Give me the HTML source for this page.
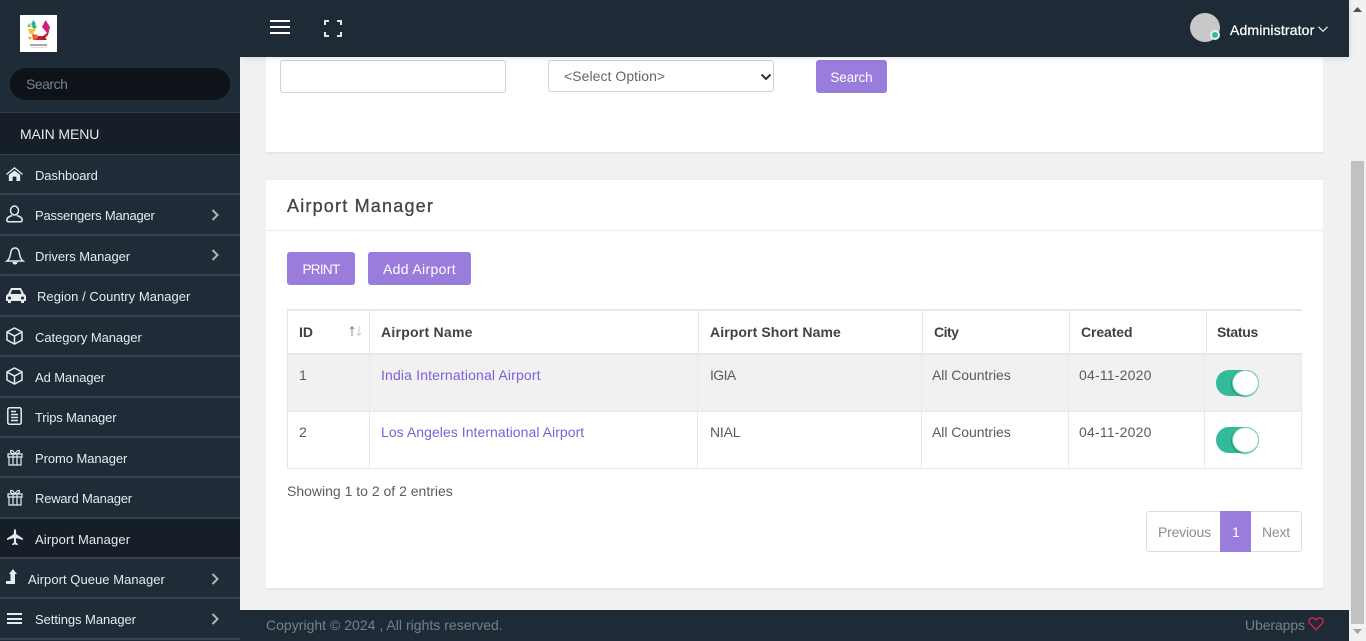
<!DOCTYPE html>
<html lang="en"><head><meta charset="utf-8"><title>Airport Manager</title>
<style>
html,body{margin:0;padding:0;width:1366px;height:641px;overflow:hidden;background:#f1f1f1;font-family:"Liberation Sans",sans-serif}
.a{position:absolute;box-sizing:border-box}
.t{position:absolute;white-space:nowrap;line-height:20px;height:20px}
.m{color:#e6ebef;font-size:13px;left:35px}
.sep{position:absolute;left:0;width:240px;height:2px;background:#37424e}
.b{position:absolute;background:#997cdb;color:#fff;border-radius:3px;font-size:14px;text-align:center}
.h{font-weight:bold;font-size:14px;color:#3d4248}
.c{font-size:14px;color:#585c60}
.l{font-size:14px;color:#7f5fd9}
.v{position:absolute;width:1px;background:#e2eaf1}
.ln{position:absolute;background:#e2eaf1}
svg{position:absolute;overflow:visible}
.ic{fill:none;stroke:#e6ebef;stroke-width:1.5}
.sw{position:absolute;left:1216px;width:43px;height:26px;background:#33bb99;border-radius:13px}
.sw i{position:absolute;left:16px;top:0;width:27px;height:26px;box-sizing:border-box;background:#fff;border:1px solid #7fd0bb;border-radius:50%;box-shadow:-1px 1px 1px rgba(20,120,95,.6)}
</style></head><body>

<!-- main area -->
<div class="a" style="left:266px;top:57px;width:1057px;height:95px;background:#fff"></div>
<div class="a" style="left:266px;top:152px;width:1058px;height:2px;background:#e6e6e6"></div>
<div class="a" style="left:280px;top:60px;width:226px;height:33px;background:#fff;border:1px solid #d2d2d2;border-radius:3px"></div>
<div class="a" style="left:548px;top:60px;width:226px;height:32px;background:#fff;border:1px solid #d2d2d2;border-radius:3px"></div>
<div class="t" style="left:564px;top:66px;font-size:14px;color:#666;letter-spacing:.05px">&lt;Select Option&gt;</div>
<svg style="left:760px;top:73px" width="12" height="8"><path d="M1.500 1.500L6 6L10.500 1.500" fill="none" stroke="#333" stroke-width="2"/></svg>
<div class="b" style="left:816px;top:60px;width:71px;height:33px;line-height:35px;font-size:13.500px;letter-spacing:-.1px">Search</div>

<div class="a" style="left:266px;top:180px;width:1057px;height:408px;background:#fff"></div>
<div class="a" style="left:266px;top:179px;width:1057px;height:1px;background:#ededed"></div>
<div class="a" style="left:266px;top:588px;width:1058px;height:2px;background:#e6e6e6"></div>
<div class="t" style="left:287px;top:196px;font-size:18px;color:#444;letter-spacing:1.2px;-webkit-text-stroke:.3px #444">Airport Manager</div>
<div class="a" style="left:266px;top:230px;width:1057px;height:1px;background:#ececec"></div>
<div class="b" style="left:287px;top:252px;width:68px;height:33px;line-height:35px;font-size:13.500px;letter-spacing:-.7px">PRINT</div>
<div class="b" style="left:368px;top:252px;width:103px;height:33px;line-height:35px;letter-spacing:.35px">Add Airport</div>

<!-- table -->
<div class="a" style="left:288px;top:354px;width:1013px;height:58px;background:#f1f1f1"></div>
<div class="ln" style="left:287px;top:309px;width:1015px;height:2px"></div>
<div class="ln" style="left:287px;top:353px;width:1015px;height:2px"></div>
<div class="ln" style="left:287px;top:411px;width:1015px;height:1px"></div>
<div class="ln" style="left:287px;top:468px;width:1015px;height:1px"></div>
<div class="v" style="left:287px;top:310px;height:159px"></div>
<div class="v" style="left:369px;top:310px;height:159px"></div>
<div class="v" style="left:698px;top:310px;height:44px"></div><div class="v" style="left:697px;top:354px;height:115px"></div>
<div class="v" style="left:922px;top:310px;height:44px"></div><div class="v" style="left:921px;top:354px;height:115px"></div>
<div class="v" style="left:1069px;top:310px;height:44px"></div><div class="v" style="left:1068px;top:354px;height:115px"></div>
<div class="v" style="left:1206px;top:310px;height:44px"></div><div class="v" style="left:1204px;top:354px;height:115px"></div>
<div class="v" style="left:1301px;top:354px;height:115px"></div>

<div class="t h" style="left:299px;top:322px">ID</div>
<svg style="left:349px;top:326px" width="13" height="10" viewBox="0 0 13 10"><path d="M3 10V1M1 3L3 .8L5 3" fill="none" stroke="#8a8a8a" stroke-width="1"/><path d="M10 0V9M8 7L10 9.200L12 7" fill="none" stroke="#cfcfcf" stroke-width="1"/></svg>
<div class="t h" style="left:381px;top:322px;letter-spacing:.25px">Airport Name</div>
<div class="t h" style="left:710px;top:322px;letter-spacing:.1px">Airport Short Name</div>
<div class="t h" style="left:934px;top:322px;letter-spacing:-.5px">City</div>
<div class="t h" style="left:1081px;top:322px;letter-spacing:-.1px">Created</div>
<div class="t h" style="left:1217px;top:322px;letter-spacing:-.3px">Status</div>

<div class="t c" style="left:299px;top:365px">1</div>
<div class="t l" style="left:381px;top:365px;letter-spacing:.15px">India International Airport</div>
<div class="t c" style="left:710px;top:365px;letter-spacing:-.6px">IGIA</div>
<div class="t c" style="left:932px;top:365px;letter-spacing:-.05px">All Countries</div>
<div class="t c" style="left:1079px;top:365px;letter-spacing:.2px">04-11-2020</div>
<div class="sw" style="top:370px"><i></i></div>

<div class="t c" style="left:299px;top:422px">2</div>
<div class="t l" style="left:381px;top:422px;letter-spacing:.05px">Los Angeles International Airport</div>
<div class="t c" style="left:710px;top:422px;letter-spacing:-.2px">NIAL</div>
<div class="t c" style="left:932px;top:422px;letter-spacing:-.05px">All Countries</div>
<div class="t c" style="left:1079px;top:422px;letter-spacing:.2px">04-11-2020</div>
<div class="sw" style="top:427px"><i></i></div>

<div class="t c" style="left:287px;top:481px">Showing 1 to 2 of 2 entries</div>

<div class="a" style="left:1146px;top:511px;width:156px;height:41px;background:#fff;border:1px solid #dedede;border-radius:3px"></div>
<div class="a" style="left:1220px;top:511px;width:31px;height:41px;background:#997cdb"></div>
<div class="t" style="left:1158px;top:522px;font-size:14px;color:#8b9096;letter-spacing:-.2px">Previous</div>
<div class="t" style="left:1232px;top:522px;font-size:14px;color:#fff">1</div>
<div class="t" style="left:1262px;top:522px;font-size:14px;color:#8b9096;letter-spacing:-.2px">Next</div>

<!-- footer -->
<div class="a" style="left:240px;top:610px;width:1109px;height:31px;background:#1e2b37"></div>
<div class="t" style="left:266px;top:615px;font-size:14px;color:#76808a;letter-spacing:.02px">Copyright © 2024 , All rights reserved.</div>
<div class="t" style="left:1245px;top:615px;font-size:14px;color:#76808a;letter-spacing:-.1px">Uberapps</div>
<svg style="left:1308px;top:617px" width="16" height="14" viewBox="0 0 16 14"><path d="M8 12.800L1.800 6.500C-.2 3.800 1.500 1 4.200 1C6 1 7.300 2 8 3.200C8.700 2 10 1 11.800 1C14.500 1 16.200 3.800 14.200 6.500Z" fill="none" stroke="#e0244e" stroke-width="1.300"/></svg>

<!-- scrollbar -->
<div class="a" style="left:1349px;top:0;width:17px;height:641px;background:#f1f1f1"></div>
<div class="a" style="left:1351px;top:161px;width:13px;height:463px;background:#c1c1c1"></div>
<svg style="left:1351px;top:6px" width="13" height="7"><path d="M6.500 1L11 6H2Z" fill="#505050"/></svg>
<svg style="left:1351px;top:628px" width="13" height="7"><path d="M6.500 6L11 1H2Z" fill="#a3a3a3"/></svg>

<!-- header -->
<div class="a" style="left:240px;top:0;width:1109px;height:57px;background:#1e2b37;box-shadow:0 1px 6px rgba(0,0,0,.12)"></div>
<div class="a" style="left:270px;top:20px;width:20px;height:2px;background:#fff"></div>
<div class="a" style="left:270px;top:26px;width:20px;height:2px;background:#fff"></div>
<div class="a" style="left:270px;top:32px;width:20px;height:2px;background:#fff"></div>
<svg style="left:324px;top:20px" width="18" height="17" viewBox="0 0 18 17"><path d="M1 5V1H5M13 1H17V5M17 12V16H13M5 16H1V12" fill="none" stroke="#fff" stroke-width="1.800"/></svg>
<div class="a" style="left:1190px;top:13px;width:30px;height:29px;border-radius:50%;background:#c8c8c8"></div>
<div class="a" style="left:1210px;top:30px;width:10px;height:10px;border-radius:50%;background:#33bb99;border:2px solid #eee"></div>
<div class="t" style="left:1230px;top:20px;font-size:14px;color:#fff;letter-spacing:.15px;-webkit-text-stroke:.25px #fff">Administrator</div>
<svg style="left:1318px;top:26px" width="10" height="7"><path d="M.5 .8L5 5.300L9.500 .8" fill="none" stroke="#e8e8e8" stroke-width="1.200"/></svg>

<!-- sidebar -->
<div class="a" style="left:0;top:0;width:240px;height:641px;background:#1f2b37"></div>
<div class="a" style="left:20px;top:15px;width:37px;height:37px;background:#fff"></div>
<svg style="left:20px;top:15px" width="37" height="37" viewBox="0 0 37 37">
<path d="M22 12L25.500 5L30 12L27 18Z" fill="#d31f7c"/><path d="M30 12L28 20L23 25H15L18 21H23L27 18Z" fill="#c0232f"/>
<path d="M13.500 5L16 9L13.500 13L11 9Z" fill="#22b5b0"/><path d="M9 8L11.500 12H7Z" fill="#8bc34a"/><path d="M14 9L17 12L14 14L12 12Z" fill="#45a85a"/>
<path d="M8 14H16L13 19H10Z" fill="#f6c12c"/><path d="M12 19L18 20L15 25H13Z" fill="#ee5a24"/><path d="M8 22H12L10 25Z" fill="#f39c12"/><path d="M21 25L24 21L27 25Z" fill="#a3212b"/>
<rect x="10" y="29" width="17" height="2" fill="#aaa"/><rect x="11" y="32" width="16" height="1" fill="#f6d5d5"/>
</svg>
<div class="a" style="left:10px;top:68px;width:220px;height:32px;border-radius:16px;background:#0d1319"></div>
<div class="t" style="left:26px;top:74px;font-size:14px;color:#77808a;letter-spacing:-.5px">Search</div>
<div class="a" style="left:0;top:112px;width:240px;height:43px;background:#161f27;border-top:1px solid #323d48;border-bottom:1px solid #37424e"></div>
<div class="t" style="left:20px;top:124px;font-size:14px;color:#e6ebef;letter-spacing:-.1px">MAIN MENU</div>

<div class="a" style="left:0;top:518px;width:240px;height:40px;background:#161f27"></div>
<div class="sep" style="top:193px"></div><div class="sep" style="top:234px"></div><div class="sep" style="top:274px"></div><div class="sep" style="top:315px"></div><div class="sep" style="top:355px"></div><div class="sep" style="top:396px"></div><div class="sep" style="top:436px"></div><div class="sep" style="top:476px"></div><div class="sep" style="top:517px"></div><div class="sep" style="top:557px"></div><div class="sep" style="top:597px"></div><div class="sep" style="top:638px"></div>

<div class="t m" style="top:166px;letter-spacing:-.1px">Dashboard</div>
<div class="t m" style="top:206px;letter-spacing:-.22px">Passengers Manager</div>
<div class="t m" style="top:247px;letter-spacing:-.07px">Drivers Manager</div>
<div class="t m" style="top:287px;left:37px;letter-spacing:.04px">Region / Country Manager</div>
<div class="t m" style="top:328px;letter-spacing:-.06px">Category Manager</div>
<div class="t m" style="top:368px;letter-spacing:-.1px">Ad Manager</div>
<div class="t m" style="top:408px;letter-spacing:-.15px">Trips Manager</div>
<div class="t m" style="top:449px;letter-spacing:-.07px">Promo Manager</div>
<div class="t m" style="top:489px;letter-spacing:-.2px">Reward Manager</div>
<div class="t m" style="top:530px;letter-spacing:.13px">Airport Manager</div>
<div class="t m" style="top:570px;left:28px;letter-spacing:.05px">Airport Queue Manager</div>
<div class="t m" style="top:610px;letter-spacing:-.06px">Settings Manager</div>

<svg style="left:211px;top:209px" width="8" height="12"><path d="M1.500 1L6.500 6L1.500 11" fill="none" stroke="#aeb4ba" stroke-width="2"/></svg>
<svg style="left:211px;top:249px" width="8" height="12"><path d="M1.500 1L6.500 6L1.500 11" fill="none" stroke="#aeb4ba" stroke-width="2"/></svg>
<svg style="left:211px;top:573px" width="8" height="12"><path d="M1.500 1L6.500 6L1.500 11" fill="none" stroke="#aeb4ba" stroke-width="2"/></svg>
<svg style="left:211px;top:613px" width="8" height="12"><path d="M1.500 1L6.500 6L1.500 11" fill="none" stroke="#aeb4ba" stroke-width="2"/></svg>

<!-- icons -->
<svg style="left:6px;top:167px" width="17" height="14" viewBox="0 0 18 16" preserveAspectRatio="none"><path d="M9 0L18 8L17 9L9 2L1 9L0 8ZM3 9L9 4L15 9V16H11V11H7V16H3Z" fill="#e6ebef"/></svg>
<svg style="left:6px;top:205px" width="18" height="18" viewBox="0 0 18 18"><ellipse class="ic" cx="8.500" cy="5.500" rx="4" ry="4.500"/><path class="ic" d="M6.200 10.500C3 11.500 .8 12.500 .8 15C.8 16.300 1.500 16.800 2.500 16.800H14.500C15.500 16.800 16.200 16.300 16.200 15C16.200 12.500 14 11.500 10.800 10.500"/></svg>
<svg style="left:6px;top:247px" width="18" height="18" viewBox="0 0 18 18"><path class="ic" d="M9 1C5.500 1 5 4 4.500 7C4 10 3 12.500 1 14H17C15 12.500 14 10 13.500 7C13 4 12.500 1 9 1Z"/><path d="M6.500 15H11.500C11.500 17 10 17.500 9 17.500C8 17.500 6.500 17 6.500 15Z" fill="#e6ebef"/></svg>
<svg style="left:6px;top:287px" width="20" height="17" viewBox="0 0 20 17"><path d="M5 1H15L18 7C19.500 7.500 20 8.500 20 10V14H18V16H15V14H5V16H2V14H0V10C0 8.500 .5 7.500 2 7ZM6 3L4.500 7H15.500L14 3ZM3.500 9.500A1.500 1.500 0 1 0 3.510 12.500A1.500 1.500 0 1 0 3.500 9.500ZM16.500 9.500A1.500 1.500 0 1 0 16.510 12.500A1.500 1.500 0 1 0 16.500 9.500Z" fill="#e6ebef" fill-rule="evenodd"/></svg>
<svg style="left:6px;top:327px" width="17" height="18" viewBox="0 0 17 18"><path class="ic" d="M8.500 1L16 5V13L8.500 17L1 13V5ZM1 5L8.500 9L16 5M8.500 9V17"/></svg>
<svg style="left:6px;top:367px" width="17" height="18" viewBox="0 0 17 18"><path class="ic" d="M8.500 1L16 5V13L8.500 17L1 13V5ZM1 5L8.500 9L16 5M8.500 9V17"/></svg>
<svg style="left:7px;top:407px" width="15" height="18" viewBox="0 0 15 18"><rect class="ic" x=".8" y=".8" width="13.400" height="16.400" rx="1.500"/><path d="M4 4.500H9M4 7.500H11M4 10.500H11M4 13.500H11" stroke="#e6ebef" stroke-width="1.400"/></svg>
<svg style="left:7px;top:449px" width="16" height="17" viewBox="0 0 16 17"><path class="ic" style="stroke-width:1.200" d="M1 5H15V8H1ZM2 8V16H14V8M6 5V16M10 5V16M8 5C6 1 3.500 .5 3.500 2.500C3.500 4 6 5 8 5C10 5 12.500 4 12.500 2.500C12.500 .5 10 1 8 5Z"/></svg>
<svg style="left:7px;top:489px" width="16" height="17" viewBox="0 0 16 17"><path class="ic" style="stroke-width:1.200" d="M1 5H15V8H1ZM2 8V16H14V8M6 5V16M10 5V16M8 5C6 1 3.500 .5 3.500 2.500C3.500 4 6 5 8 5C10 5 12.500 4 12.500 2.500C12.500 .5 10 1 8 5Z"/></svg>
<svg style="left:7px;top:529px" width="16" height="17" viewBox="0 0 16 17"><path d="M8 0C8.800 0 9.200 2 9.200 5L16 9.500V11L9.200 9L9 13.500L11 15V16L8 15.500L5 16V15L7 13.500L6.800 9L0 11V9.500L6.800 5C6.800 2 7.200 0 8 0Z" fill="#e6ebef"/></svg>
<svg style="left:6px;top:569px" width="11" height="15" viewBox="0 0 11 15"><path d="M7 0L11 5H9V15H0V12H4.500V5H3Z" fill="#e6ebef"/></svg>
<div class="a" style="left:7px;top:613px;width:15px;height:2px;background:#e6ebef"></div>
<div class="a" style="left:7px;top:618px;width:15px;height:2px;background:#e6ebef"></div>
<div class="a" style="left:7px;top:622px;width:15px;height:2px;background:#e6ebef"></div>
</body></html>
